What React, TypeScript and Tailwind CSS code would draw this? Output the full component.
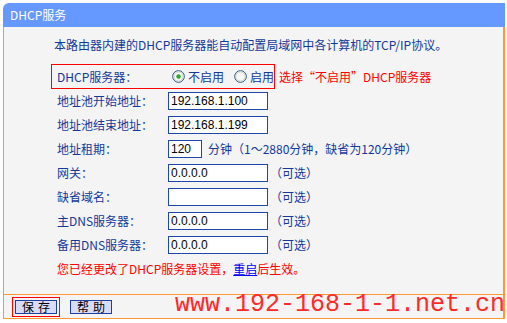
import React from "react";

const font = "font-['Noto_Sans_CJK_SC',sans-serif]";

const Radio = ({ checked }: { checked?: boolean }) => (
  <svg width="13" height="13" viewBox="0 0 13 13" className="shrink-0">
    <circle cx="6.5" cy="6.5" r="5.8" fill="#f7f7f4" stroke="#1c5180" strokeWidth="1" />
    <circle cx="6.5" cy="6.5" r="4.6" fill="none" stroke="#d4d4cc" strokeWidth="1" />
    {checked && <circle cx="6.5" cy="6.5" r="2.2" fill="#2aa72a" />}
  </svg>
);

const rows = [
  { label: "地址池开始地址：", value: "192.168.1.100" },
  { label: "地址池结束地址：", value: "192.168.1.199" },
  { label: "地址租期：", value: "120", lease: true },
  { label: "网关：", value: "0.0.0.0", optional: true },
  { label: "缺省域名：", value: "", optional: true },
  { label: "主DNS服务器：", value: "0.0.0.0", optional: true },
  { label: "备用DNS服务器：", value: "0.0.0.0", optional: true },
];

const Btn = ({ a, b }: { a: string; b: string }) => (
  <button className="w-[42px] h-[14px] bg-[#d8dcf8] border border-[#1f3fa0] text-black text-[12px] leading-[12px] flex items-center justify-center gap-[4px]">
    <span>{a}</span>
    <span>{b}</span>
  </button>
);

export default function App() {
  return (
    <div className={`relative w-[507px] h-[323px] bg-white pt-[3px] pl-[3px] ${font} text-[12px] leading-[16px]`}>
      <div className="w-[502px]">
        <div className="h-[24px] bg-[#6699ff] rounded-tl-[6px] flex items-center pl-[7px] text-white">
          DHCP服务
        </div>

        <div className="bg-[#f4f4f4] border-l border-r-2 border-[#ff9933] h-[267px] text-[#13399a]">
          <div className="pt-[10px] pl-[50px] h-[37px]">
            本路由器内建的DHCP服务器能自动配置局域网中各计算机的TCP/IP协议。
          </div>

          <div className="flex items-center h-[25px] pl-[47px]">
            <div className="flex items-center w-[224px] h-[25px] border border-[#ff0000] pl-[5px]">
              <span className="w-[111px]">DHCP服务器：</span>
              <span className="ml-[4px] flex items-center gap-[3px]">
                <Radio checked />
                <span>不启用</span>
              </span>
              <span className="ml-[10px] flex items-center gap-[3px]">
                <Radio />
                <span>启用</span>
              </span>
            </div>
            <span className="ml-[4px] text-[#ff0000]">选择“不启用”DHCP服务器</span>
          </div>

          {rows.map((r) => (
            <div key={r.label} className="flex items-center h-[24px] pl-[53px]">
              <span className="w-[111px]">{r.label}</span>
              <div
                className={`h-[18px] bg-white border border-[#1f48a8] flex items-center pl-[2px] font-['Liberation_Sans',sans-serif] text-black ${
                  r.lease ? "w-[34px]" : "w-[100px]"
                }`}
              >
                {r.value}
              </div>
              {r.lease && <span className="ml-[6px]">分钟（1～2880分钟，缺省为120分钟）</span>}
              {r.optional && <span className="ml-[2px]">（可选）</span>}
            </div>
          ))}

          <div className="flex items-center h-[24px] pl-[53px] text-[#ff0000]">
            您已经更改了DHCP服务器设置，
            <span className="text-[#0000ee] underline">重启</span>
            后生效。
          </div>
        </div>

        <div className="h-[25px] bg-[#f4f4f4] border-t border-b border-l border-r-2 border-[#ff9933] flex items-center pl-[8px]">
          <div className="border border-[#ff0000] p-[2px] flex">
            <Btn a="保" b="存" />
          </div>
          <div className="ml-[10px]">
            <Btn a="帮" b="助" />
          </div>
        </div>
      </div>

      <div className="absolute left-[175px] top-[291px] font-['Liberation_Mono',monospace] text-[25px] leading-[28px] text-[#ff2a2a]">
        www.192-168-1-1.net.cn
      </div>
    </div>
  );
}
